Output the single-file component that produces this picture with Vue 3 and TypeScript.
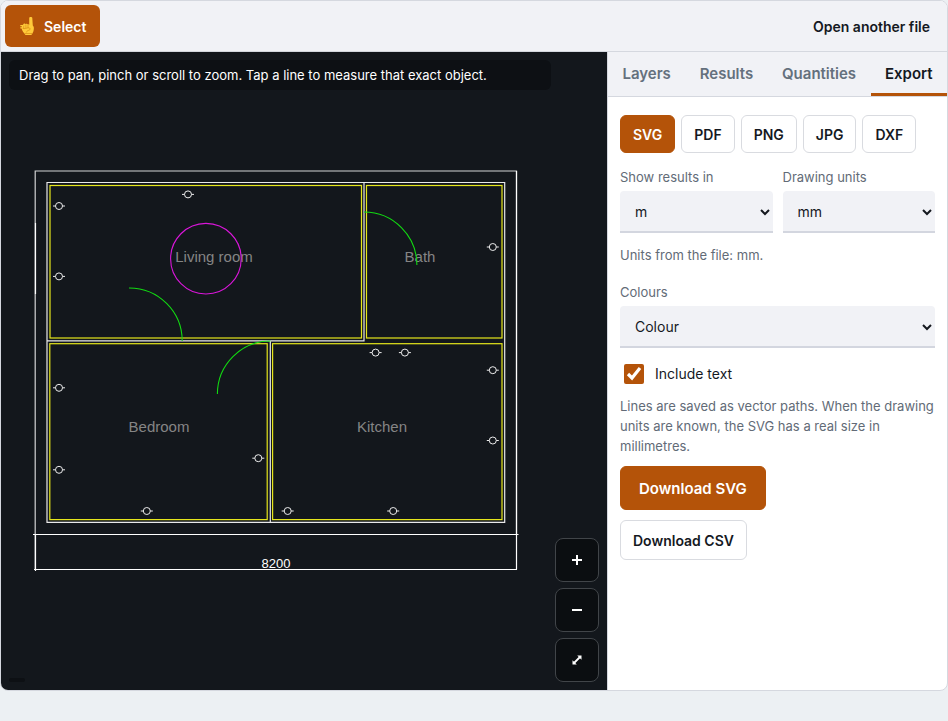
<script setup lang="ts">
import { ref } from 'vue'

interface Point { x: number; y: number }
interface Room extends Point { name: string; w: number; h: number; tx: number; ty: number }

const tabs = ['Layers', 'Results', 'Quantities', 'Export']
const formats = ['SVG', 'PDF', 'PNG', 'JPG', 'DXF']

const activeTab = ref('Export')
const format = ref('SVG')
const resultUnit = ref('m')
const drawingUnit = ref('mm')
const colours = ref('Colour')
const includeText = ref(true)

const rooms: Room[] = [
  { name: 'Living room', x: 50, y: 185.5, w: 311.5, h: 152.5, tx: 214, ty: 262 },
  { name: 'Bath', x: 366.5, y: 185.5, w: 135.5, h: 152.5, tx: 420, ty: 262 },
  { name: 'Bedroom', x: 49.8, y: 343.7, w: 217.4, h: 175.9, tx: 159, ty: 432 },
  { name: 'Kitchen', x: 272.6, y: 343.7, w: 229.4, h: 175.9, tx: 382, ty: 432 },
]

const sockets: Point[] = [
  { x: 188, y: 194.4 }, { x: 59, y: 206 }, { x: 59, y: 276.4 }, { x: 59, y: 387.8 },
  { x: 59, y: 469.8 }, { x: 146.8, y: 511 }, { x: 258.3, y: 458.2 }, { x: 287.7, y: 511 },
  { x: 393.2, y: 511 }, { x: 492.8, y: 440.5 }, { x: 492.8, y: 370.2 }, { x: 492.8, y: 247 },
  { x: 375.6, y: 352.6 }, { x: 404.9, y: 352.6 },
]
</script>

<template>
  <main class="app">
    <header class="toolbar">
      <button class="tool" type="button">
        <svg class="hand" viewBox="0 0 16 20" aria-hidden="true">
          <path d="M9.2 10V2.1C9.2.7 12.3.7 12.3 2.1l.5 7.3c1.3 1.1 1.2 3 .9 4.6-.3 2.3-1.3 3.3-1.6 4.1-.2.7-.7 1-1.4 1H6.2c-.8 0-1.2-.4-1.4-1.1-.5-1.2-2.3-2.3-2.8-4.3-.5-1.6-.6-3.8.5-4.5l1-1.2c.8-.7 1.7-.4 2 .2.8-.8 2-.6 2.3.3.6-.3 1.1-.1 1.4.5z" fill="#ffca3a" />
          <path d="M3.7 9.2v3.2M5.9 9v3M8 9.3v2.4M2.5 12.3c2.3 1 4-.3 5.600-.5 2.300-.2 2.600 1.900 1 2.400-1.300.4-2.300.7-2.700 1.900M5 17.500h6.700" fill="none" stroke="#d98b16" stroke-width=".7" stroke-linecap="round" />
          <path d="M.8 9.700h2.400M.8 11.800h1.700" stroke="#ffca3a" stroke-width="1.300" stroke-linecap="round" />
        </svg>
        Select
      </button>
      <button class="open" type="button">Open another file</button>
    </header>

    <div class="workspace">
      <section class="canvas" aria-label="Drawing">
        <svg class="plan" viewBox="1 52 606 638" preserveAspectRatio="xMidYMid meet">
          <g fill="none" stroke-width="1">
            <g stroke="#f4f4f4" stroke-width="1.200">
              <path d="M35.200 570V171H516.500V534" opacity=".85" />
              <path d="M35.500 223V294M35.500 534V571M516.500 171V569.500" stroke="#fff" />
              <path d="M33 534.500H518.500M34 569.500H517" stroke="#fff" />
              <path d="M47 182.500H504.700V522.400H47ZM364 182.500V340.800H47M270.300 340.800V522.400" opacity=".95" />
            </g>
            <g stroke="#e6e61c" stroke-width="1.200">
              <rect v-for="room in rooms" :key="room.name" :x="room.x" :y="room.y" :width="room.w" :height="room.h" />
            </g>
            <g class="labels">
              <text v-for="room in rooms" :key="room.name" :x="room.tx" :y="room.ty">{{ room.name }}</text>
            </g>
            <circle cx="205.900" cy="258.700" r="35.300" stroke="#d916d9" stroke-width="1.100" />
            <g stroke="#12d912" stroke-width="1.100">
              <path d="M129 288A53 53 0 0 1 182.200 341" />
              <path d="M364 212A53 53 0 0 1 416.900 265" />
              <path d="M217.400 394A53 53 0 0 1 270.400 341" />
            </g>
            <g stroke="#ededed">
              <g v-for="(s, i) in sockets" :key="i">
                <circle :cx="s.x" :cy="s.y" r="3.500" />
                <path :d="`M${s.x - 6} ${s.y}h2.5M${s.x + 3.5} ${s.y}h2.5`" />
              </g>
            </g>
          </g>
          <text class="dimension" x="276" y="568">8200</text>
        </svg>
        <p class="hint">Drag to pan, pinch or scroll to zoom. Tap a line to measure that exact object.</p>
        <div class="status"></div>
        <div class="zoom">
          <button type="button" aria-label="Zoom in">
            <svg viewBox="0 0 12 12"><path d="M6 1v10M1 6h10" stroke="#fff" stroke-width="2" /></svg>
          </button>
          <button type="button" aria-label="Zoom out">
            <svg viewBox="0 0 12 12"><path d="M1 6h10" stroke="#fff" stroke-width="2" /></svg>
          </button>
          <button type="button" aria-label="Fit drawing">
            <svg viewBox="0 0 12 12">
              <path d="M3 9 9 3" stroke="#fff" stroke-width="1.800" />
              <path d="M6.200 1.500h4.300v4.300zM1.500 6.200v4.300h4.300z" fill="#fff" />
            </svg>
          </button>
        </div>
      </section>

      <aside class="side">
        <nav class="tabs" role="tablist">
          <button
            v-for="tab in tabs" :key="tab" type="button" role="tab" class="tab"
            :class="{ active: tab === activeTab }" :aria-selected="tab === activeTab" @click="activeTab = tab"
          >{{ tab }}</button>
        </nav>
        <div class="panel">
          <div class="formats">
            <button
              v-for="f in formats" :key="f" type="button" class="format"
              :class="{ active: f === format }" @click="format = f"
            >{{ f }}</button>
          </div>
          <div class="units">
            <div class="field">
              <label for="result-unit">Show results in</label>
              <select id="result-unit" v-model="resultUnit"><option>m</option><option>mm</option></select>
            </div>
            <div class="field">
              <label for="drawing-unit">Drawing units</label>
              <select id="drawing-unit" v-model="drawingUnit"><option>mm</option><option>m</option></select>
            </div>
          </div>
          <p class="note source">Units from the file: mm.</p>
          <div class="field">
            <label for="colours">Colours</label>
            <select id="colours" v-model="colours"><option>Colour</option><option>Black</option></select>
          </div>
          <label class="check"><input v-model="includeText" type="checkbox" />Include text</label>
          <p class="note">Lines are saved as vector paths. When the drawing units are known, the SVG has a real size in millimetres.</p>
          <button class="download primary" type="button">Download {{ format }}</button>
          <button class="download" type="button">Download CSV</button>
        </div>
      </aside>
    </div>
  </main>
</template>

<style>
body {
  background: #ecf0f3;
}
</style>

<style scoped>
* {
  box-sizing: border-box;
}
.app {
  display: flex;
  flex-direction: column;
  min-height: calc(100vh - 30px);
  overflow: hidden;
  border: 1px solid #d5d8df;
  border-radius: 8px;
  background: #fff;
  color: #15191f;
  font-family: Inter, "Liberation Sans", sans-serif;
  font-size: 14px;
}
button {
  font: inherit;
  font-weight: 600;
  color: inherit;
  cursor: pointer;
}
p {
  margin: 0;
}
.toolbar {
  display: flex;
  align-items: center;
  justify-content: space-between;
  padding: 4px;
  border-bottom: 1px solid #d5d8df;
  background: #f1f2f6;
}
.tool {
  display: flex;
  align-items: center;
  gap: 8px;
  height: 42px;
  padding: 0 14px 0 15px;
  border: 0;
  border-radius: 6px;
  background: #b45309;
  color: #fff;
}
.hand {
  width: 16px;
  height: 20px;
}
.open {
  height: 42px;
  padding: 0 13px;
  border: 0;
  background: none;
}
.workspace {
  display: grid;
  grid-template-columns: minmax(0, 1fr) 340px;
  flex: 1;
}
.canvas {
  position: relative;
  display: flex;
  background: #13171c;
}
.plan {
  width: 100%;
  height: 100%;
}
.plan text {
  font-family: "Liberation Sans", Arial, sans-serif;
  text-anchor: middle;
}
.labels text {
  fill: #858585;
  stroke: none;
  font-size: 15px;
}
.dimension {
  fill: #fff;
  font-size: 13px;
}
.hint {
  position: absolute;
  top: 8px;
  left: 8px;
  right: 56px;
  padding: 5px 10px;
  border-radius: 6px;
  background: #0d1014;
  color: #fff;
  font-size: 13px;
  line-height: 20px;
}
.status {
  position: absolute;
  bottom: 8px;
  left: 8px;
  width: 16px;
  height: 4px;
  border-radius: 4px;
  background: #0d1014;
}
.zoom {
  position: absolute;
  right: 8px;
  bottom: 8px;
  display: grid;
  gap: 6px;
}
.zoom button {
  display: grid;
  place-items: center;
  width: 44px;
  height: 44px;
  padding: 0;
  border: 1px solid #414549;
  border-radius: 8px;
  background: #0b0e11;
}
.zoom svg {
  width: 12px;
  height: 12px;
}
.side {
  border-left: 1px solid #d5d8df;
}
.tabs {
  display: flex;
  height: 45px;
  border-bottom: 1px solid #d5d8df;
  background: #f1f2f6;
}
.tab {
  flex: 1 1 auto;
  padding: 2px 0 0;
  border: 0;
  border-bottom: 3px solid transparent;
  background: none;
  color: #64707d;
  font-size: 15px;
}
.tab.active {
  border-color: #b45309;
  color: #15191f;
}
.panel {
  display: flex;
  flex-direction: column;
  align-items: flex-start;
  padding: 18px 12px;
}
.formats {
  display: flex;
  gap: 6px;
  margin-bottom: 14px;
}
.format {
  height: 38px;
  padding: 0 12px;
  border: 1px solid #d9dbe0;
  border-radius: 6px;
  background: #fff;
}
.format.active,
.download.primary {
  border-color: #b45309;
  background: #b45309;
  color: #fff;
}
.units {
  display: grid;
  grid-template-columns: 1fr 1fr;
  gap: 10px;
  width: 100%;
}
.field {
  display: grid;
  gap: 4px;
  width: 100%;
}
.field label {
  color: #626b77;
  font-size: 13px;
  line-height: 20px;
}
select {
  width: 100%;
  height: 42px;
  padding: 0 0 0 11px;
  border: 0;
  border-bottom: 2px solid #d3d6df;
  border-radius: 4px 4px 0 0;
  background: #f1f2f6;
  color: #15191f;
  font: inherit;
}
.note {
  color: #626b77;
  font-size: 13px;
  line-height: 20px;
}
.source {
  margin: 12px 0 17px;
}
.check {
  display: flex;
  align-items: center;
  gap: 11px;
  margin: 16px 0 12px;
  line-height: 20px;
}
.check input {
  width: 20px;
  height: 20px;
  margin: 0 0 0 4px;
  accent-color: #b45309;
}
.download {
  height: 40px;
  margin-top: 10px;
  padding: 0 12px;
  border: 1px solid #d9dbe0;
  border-radius: 6px;
  background: #fff;
}
.download.primary {
  height: 44px;
  padding: 0 18px;
  font-size: 15px;
}
</style>
